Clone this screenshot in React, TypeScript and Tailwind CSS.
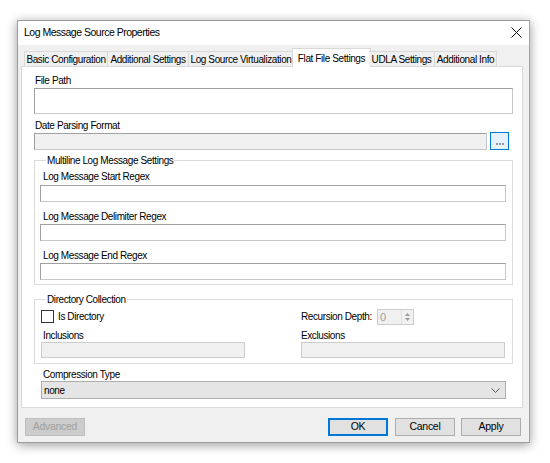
import React from "react";

const font = "font-['Liberation_Sans',Arial,sans-serif]";
const txt = "text-[10px] tracking-[-0.4px] whitespace-nowrap";

const tabs = [
  { label: "Basic Configuration", w: "w-[84px]" },
  { label: "Additional Settings", w: "w-[81px]" },
  { label: "Log Source Virtualization", w: "w-[105px]" },
  { label: "Flat File Settings", w: "w-[79px]", active: true },
  { label: "UDLA Settings", w: "w-[66px]" },
  { label: "Additional Info", w: "w-[62px]" },
];

const Label: React.FC<{ children: React.ReactNode; className?: string }> = ({ children, className }) => (
  <div className={`h-[13px] leading-[13px] text-black ${txt} ${className ?? ""}`}>{children}</div>
);

const TextBox: React.FC<{ className?: string }> = ({ className }) => (
  <div className={`h-[17px] bg-white border border-[#a0a0a0] border-b-[#c8c8c8] border-r-[#c8c8c8] ${className ?? ""}`} />
);

const Button: React.FC<{ label: string; primary?: boolean; disabled?: boolean; className?: string }> = ({
  label,
  primary,
  disabled,
  className,
}) => (
  <div
    className={`w-[60px] h-[18px] flex items-center justify-center text-[10.5px] tracking-[-0.3px] ${
      disabled
        ? "bg-[#cccccc] border border-[#bfbfbf] text-[#a0a0a0]"
        : primary
        ? "bg-[#e1e1e1] border-2 border-[#0078d7] text-black"
        : "bg-[#e1e1e1] border border-[#adadad] text-black"
    } ${className ?? ""}`}
  >
    {label}
  </div>
);

export default function App() {
  return (
    <div className={`w-[550px] h-[463px] bg-white overflow-hidden pt-[20px] pl-[17px] ${font}`}>
      <div className="w-[513px] h-[423px] border border-[#9c9c9c] border-r-[#8fa6bd] bg-[#f0f0f0] shadow-[0_2px_10px_rgba(0,0,0,0.4)] flex flex-col">
        {/* title bar */}
        <div className="h-[24px] bg-white flex items-center justify-between pl-[6px] pr-[7px]">
          <span className="text-[10.5px] tracking-[-0.5px] text-black">Log Message Source Properties</span>
          <svg width="11" height="11" viewBox="0 0 11 11" className="mt-[-1px]">
            <path d="M0.5 0.5 L10.5 10.5 M10.5 0.5 L0.5 10.5" stroke="#111" strokeWidth="1" />
          </svg>
        </div>

        {/* body */}
        <div className="flex-1 flex flex-col pl-[3px] pr-[6px] pt-[3px]">
          {/* tab strip */}
          <div className="h-[18px] flex items-end pl-[3px] relative z-10">
            {tabs.map((t) =>
              t.active ? (
                <div
                  key={t.label}
                  className={`${t.w} h-[19px] -mx-[2px] -mb-[1px] bg-white border border-b-0 border-[#d9d9d9] flex items-start justify-center pt-[2px] text-black ${txt}`}
                >
                  {t.label}
                </div>
              ) : (
                <div
                  key={t.label}
                  className={`${t.w} h-[15px] bg-[#f0f0f0] border border-b-0 border-l-0 first:border-l border-[#d9d9d9] flex items-center justify-center text-black ${txt}`}
                >
                  {t.label}
                </div>
              )
            )}
          </div>

          {/* panel */}
          <div className="h-[342px] bg-white border border-[#d9d9d9] pl-[12px] pr-[9px]">
            <Label className="mt-[7px] pl-[1px]">File Path</Label>
            <div className="mt-[1px] h-[26px] bg-white border border-[#a0a0a0] border-b-[#c8c8c8] border-r-[#c8c8c8]" />

            <Label className="mt-[5px] pl-[1px]">Date Parsing Format</Label>
            <div className="flex items-start">
              <div className="w-[453px] h-[17px] mt-[1px] bg-[#f0f0f0] border border-[#a0a0a0] border-b-[#c8c8c8] border-r-[#c8c8c8]" />
              <div className="ml-[3px] w-[19px] h-[18px] bg-[#e5f1fb] border border-[#0078d7] flex items-end justify-center pb-[4px]">
                <div className="flex gap-[1px]">
                  <span className="w-[2px] h-[2px] bg-[#9a9a9a]" />
                  <span className="w-[2px] h-[2px] bg-[#9a9a9a]" />
                  <span className="w-[2px] h-[2px] bg-[#9a9a9a]" />
                </div>
              </div>
            </div>

            <fieldset className="mt-[4px] border border-[#dcdcdc] pl-[5px] pr-[6px] pb-[4px]">
              <legend className={`ml-[6px] px-[1px] leading-[13px] text-black ${txt}`}>
                Multiline Log Message Settings
              </legend>
              <Label className="mt-[3px] pl-[3px]">Log Message Start Regex</Label>
              <TextBox className="mt-[2px]" />
              <Label className="mt-[8px] pl-[3px]">Log Message Delimiter Regex</Label>
              <TextBox className="mt-[1px]" />
              <Label className="mt-[8px] pl-[3px]">Log Message End Regex</Label>
              <TextBox className="mt-[1px]" />
            </fieldset>

            <fieldset className="mt-[8px] border border-[#dcdcdc] pl-[6px] pr-[6px] pb-[5px]">
              <legend className={`ml-[5px] px-[1px] leading-[13px] text-black ${txt}`}>
                Directory Collection
              </legend>
              <div className="mt-[2px] flex">
                <div className="w-[260px] flex items-center h-[17px]">
                  <div className="w-[13px] h-[13px] border border-[#333333] bg-white" />
                  <span className={`ml-[4px] text-black ${txt}`}>Is Directory</span>
                </div>
                <div className="flex items-center h-[17px]">
                  <span className={`w-[72px] text-black ${txt}`}>Recursion Depth:</span>
                  <div className="ml-[4px] w-[37px] h-[16px] border border-[#cccccc] bg-[#f0f0f0] flex">
                    <span className="flex-1 pl-[2px] text-[11px] leading-[14px] text-[#a0a0a0]">0</span>
                    <div className="w-[12px] flex flex-col items-center justify-center gap-[2px] border-l border-[#e0e0e0]">
                      <svg width="5" height="3" viewBox="0 0 5 3">
                        <path d="M0 3 L2.5 0 L5 3Z" fill="#9a9a9a" />
                      </svg>
                      <svg width="5" height="3" viewBox="0 0 5 3">
                        <path d="M0 0 L2.5 3 L5 0Z" fill="#9a9a9a" />
                      </svg>
                    </div>
                  </div>
                </div>
              </div>
              <div className="mt-[4px] flex">
                <div className="w-[260px]">
                  <Label className="pl-[2px]">Inclusions</Label>
                  <div className="w-[204px] h-[16px] bg-[#f0f0f0] border border-[#cccccc]" />
                </div>
                <div className="flex-1">
                  <Label>Exclusions</Label>
                  <div className="w-[204px] h-[16px] bg-[#f0f0f0] border border-[#cccccc]" />
                </div>
              </div>
            </fieldset>

            <div className="pl-[7px] pr-[7px]">
              <Label className="mt-[4px] pl-[2px]">Compression Type</Label>
              <div className="h-[18px] bg-[#e5e5e5] border border-[#adadad] flex items-center justify-between pl-[2px] pr-[5px]">
                <span className={`text-black ${txt}`}>none</span>
                <svg width="9" height="5" viewBox="0 0 9 5">
                  <path d="M0.5 0.5 L4.5 4.5 L8.5 0.5" fill="none" stroke="#555" strokeWidth="1" />
                </svg>
              </div>
            </div>
          </div>

          {/* buttons */}
          <div className="mt-[10px] flex pl-[4px]">
            <Button label="Advanced" disabled />
            <div className="flex-1" />
            <Button label="OK" primary />
            <Button label="Cancel" className="ml-[7px]" />
            <Button label="Apply" className="ml-[6px]" />
            <div className="w-[2px]" />
          </div>
        </div>
      </div>
    </div>
  );
}
